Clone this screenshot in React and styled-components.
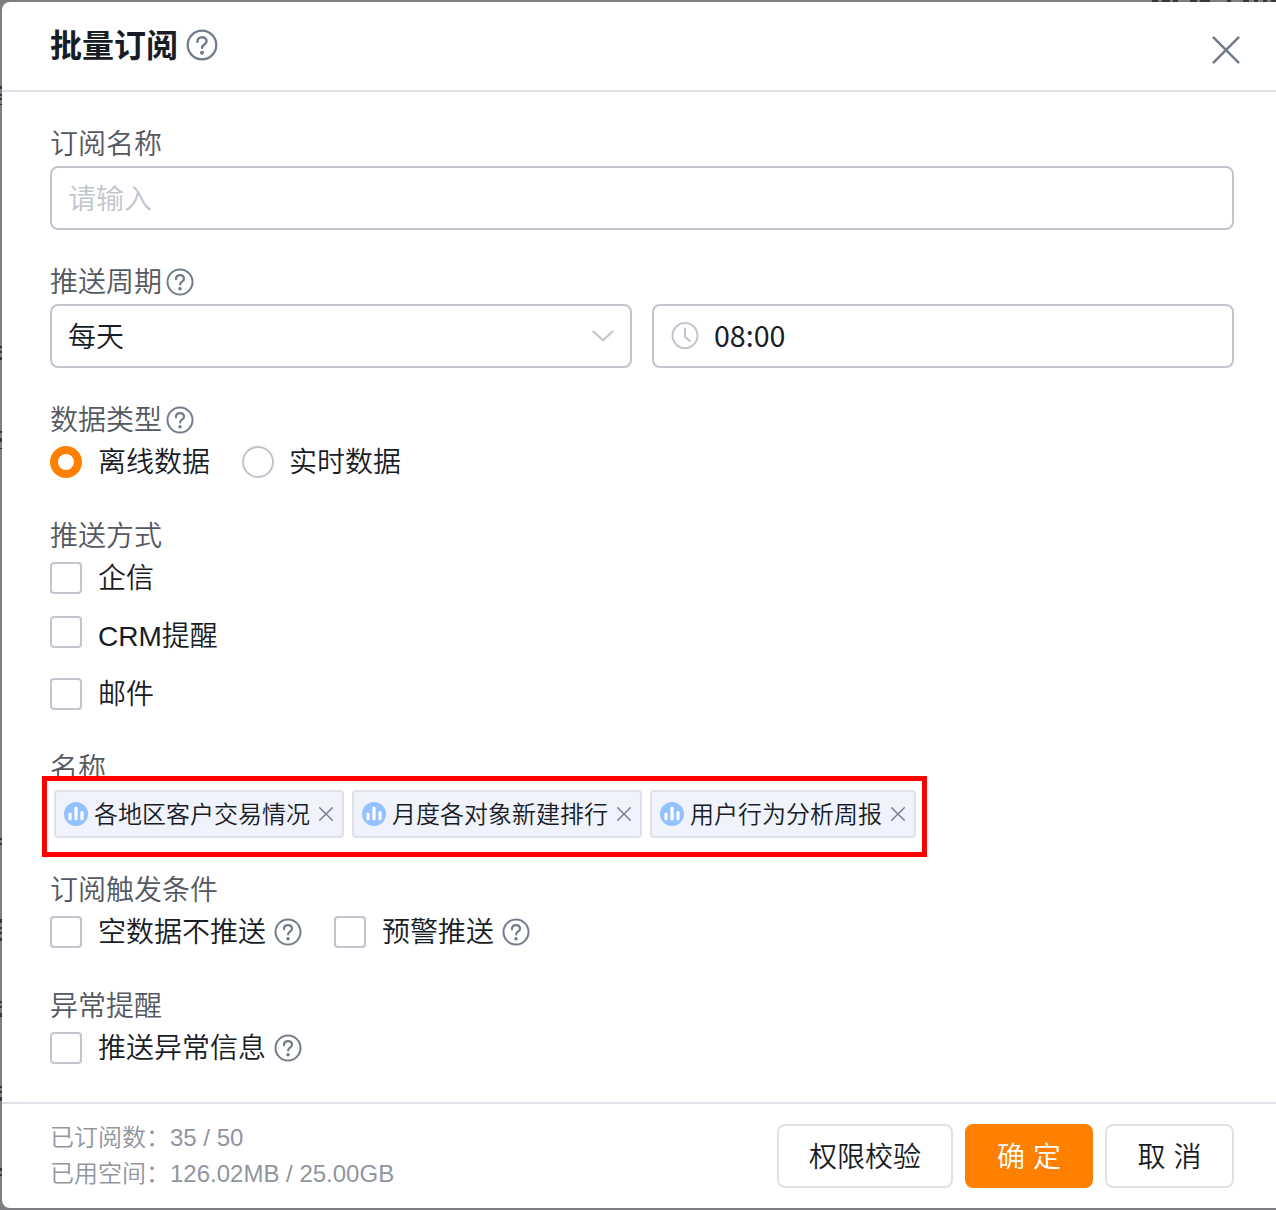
import React from 'react';
import styled, { createGlobalStyle, css } from 'styled-components';

// Styles
const GlobalStyle = createGlobalStyle`
    * { box-sizing: border-box; }

    body {
        margin: 0;
        background: #7f7f83;
        font-family: 'Liberation Sans', 'Noto Sans CJK SC', sans-serif;
        font-weight: 350;
        font-size: 28px;
        color: #181c25;
    }
`;

const Page = styled.div`
    position: relative;
    width: 1276px;
    height: 1210px;
    padding: 2px 0 2px 2px;
    overflow: hidden;
`;

// Bits of the page behind the dialog that show at its edges
const Behind = styled.i`
    position: absolute;
    background: #35373c;
`;

const Modal = styled.section`
    position: relative;
    display: flex;
    flex-direction: column;
    height: 1206px;
    background: #fff;
    border-radius: 8px 0 0 8px;
`;

const Header = styled.header`
    display: flex;
    align-items: center;
    height: 90px;
    padding: 0 36px 2px 48px;
    border-bottom: 2px solid #dee1e8;
`;

const Title = styled.h1`
    margin: 0 8px 0 0;
    padding-top: 2px;
    font-size: 32px;
    line-height: 48px;
    font-weight: 700;
`;

const Close = styled.button`
    display: flex;
    margin: 10px 0 0 auto;
    padding: 0;
    border: 0;
    background: none;
`;

const Body = styled.div`
    flex: 1;
    padding: 32px 42px 0 48px;
`;

const Field = styled.div`
    position: relative;
    margin-bottom: ${props => props.$gap || 32}px;
`;

const Label = styled.div`
    display: flex;
    align-items: center;
    gap: 4px;
    height: 39px;
    margin-bottom: 3px;
    line-height: 38px;
    color: #545861;
`;

const Text = styled.span`
    padding-top: ${props => props.$down || 0}px;
    padding-bottom: ${props => props.$up || 0}px;
`;

const Row = styled.div`
    display: flex;
    gap: ${props => props.$gap}px;
    padding-left: ${props => props.$indent || 0}px;
`;

const Box = styled.div`
    display: flex;
    align-items: center;
    flex: 1;
    height: 64px;
    padding: 0 16px;
    border: 2px solid #c1c5ce;
    border-radius: 8px;
    font-family: 'Noto Sans CJK SC', sans-serif;
    color: ${props => (props.$placeholder ? '#c1c5ce' : '#181c25')};
`;

const Time = styled.span`
    margin-left: 15px;
    padding-bottom: 3px;
    font-size: 28.6px;
    font-weight: 400;
`;

const Option = styled.label`
    display: flex;
    align-items: center;
    height: 40px;
    line-height: 40px;
    margin-bottom: ${props => props.$gap || 0}px;
`;

const mark = css`
    width: 32px;
    height: 32px;
    margin-right: 16px;
    border: 2px solid #c1c5ce;
    background: #fff;
`;

const Check = styled.span`
    ${mark}
    border-radius: 4px;
    margin-bottom: ${props => (props.$raised ? 8 : 0)}px;
`;

const Radio = styled.span`
    ${mark}
    margin-right: 15px;
    border-radius: 50%;
    ${props => props.$on && css`
        margin-right: 16px;
        border: 8px solid #ff8000;
    `}
`;

const Tag = styled.div`
    display: flex;
    align-items: center;
    height: 48px;
    padding: 0 8px;
    border: 2px solid #dee1e8;
    border-radius: 4px;
    background: #f0f3fb;
    font-size: 24px;
    white-space: nowrap;
`;

const TagText = styled.span`
    margin: 0 8px 0 6px;
    padding-bottom: 4px;
`;

const Highlight = styled.div`
    position: absolute;
    left: -8px;
    top: 28px;
    width: 885px;
    height: 81px;
    border: 5px solid #ff0000;
`;

const Footer = styled.footer`
    display: flex;
    align-items: center;
    height: 106px;
    padding: 0 42px 0 48px;
    border-top: 2px solid #dee1e8;
`;

const Usage = styled.div`
    flex: 1;
    font-size: 24px;
    line-height: 36px;
    color: #91959e;
`;

const Button = styled.button`
    width: ${props => props.$width}px;
    height: 64px;
    margin-left: 12px;
    padding: 0 0 2px;
    border: 2px solid ${props => (props.$primary ? '#ff8000' : '#dee1e8')};
    border-radius: 8px;
    background: ${props => (props.$primary ? '#ff8000' : '#fff')};
    color: ${props => (props.$primary ? '#fff' : '#181c25')};
    font: inherit;
`;

// Icons
const Icon = styled.svg`
    flex: none;
    fill: none;
    stroke-linecap: round;
    margin-left: ${props => props.$left || 0}px;
`;

const Arrow = styled(Icon)`
    margin-left: auto;
`;

const HelpIcon = ({ size = 28, left = 0 }) => (
    <Icon $left={left} width={size} height={size} viewBox="0 0 28 28" stroke="#737c8c" strokeWidth="2">
        <circle cx="14" cy="14" r="12.5" />
        <path d="M10 11.2c0-2.4 1.7-4 4-4s4 1.5 4 3.6c0 2.8-3.9 2.9-3.9 5.6" strokeWidth="2.2" />
        <circle cx="14" cy="20.8" r="1.8" fill="#737c8c" stroke="none" />
    </Icon>
);

const CloseIcon = ({ size, width }) => (
    <Icon width={size} height={size} viewBox={`0 0 ${size} ${size}`} stroke="#737c8c" strokeWidth={width}>
        <path d={`M1.7 1.7L${size - 1.7} ${size - 1.7}M${size - 1.7} 1.7L1.7 ${size - 1.7}`} />
    </Icon>
);

const ChartIcon = () => (
    <Icon width="24" height="24" viewBox="0 0 24 24">
        <circle cx="12" cy="12" r="12" fill="#94c1ff" />
        <path d="M6 12v4.8M12 6v10.8M18 10.5v6.3" stroke="#fff" strokeWidth="3.2" />
    </Icon>
);

const ClockIcon = () => (
    <Icon $left={1} width="28" height="28" viewBox="0 0 28 28" stroke="#c1c5ce" strokeWidth="2">
        <circle cx="14" cy="13.6" r="12.5" />
        <path d="M14 6.6v8.5l5 4" />
    </Icon>
);

const ArrowIcon = () => (
    <Arrow width="22" height="12" viewBox="0 0 22 12" stroke="#c1c5ce" strokeWidth="2.2">
        <path d="M1.5 1.5L11 10.3l9.5-8.8" />
    </Arrow>
);

const tags = ['各地区客户交易情况', '月度各对象新建排行', '用户行为分析周报'];

// x, y, width, height
const behind = [
    [0, 86, 2, 3], [0, 94, 2, 2], [0, 98, 2, 2], [0, 104, 2, 1],
    [0, 346, 2, 2], [0, 351, 2, 2], [0, 357, 2, 3],
    [0, 431, 2, 2], [0, 438, 2, 4], [0, 448, 2, 1],
    [0, 838, 2, 2], [0, 843, 2, 2],
    [0, 919, 2, 4], [0, 927, 2, 2], [0, 932, 2, 2], [0, 938, 2, 3],
    [0, 1001, 2, 2], [0, 1006, 2, 2], [0, 1013, 2, 4],
    [0, 1086, 2, 2], [0, 1091, 2, 2], [0, 1097, 2, 4],
    [0, 1168, 2, 3], [0, 1174, 2, 2],
    [1152, 0, 6, 2], [1162, 0, 8, 2], [1173, 0, 5, 2],
    [1190, 0, 7, 2], [1200, 0, 10, 2], [1227, 0, 4, 2],
    [1243, 0, 6, 2], [1254, 0, 4, 2], [1263, 0, 4, 2], [1271, 0, 5, 2],
];

const App = () => (
    <Page>
        <GlobalStyle />
        {behind.map(([left, top, width, height]) => (
            <Behind key={`${left}-${top}`} style={{ left, top, width, height }} />
        ))}
        <Modal>
            <Header>
                <Title>批量订阅</Title>
                <HelpIcon size={32} />
                <Close><CloseIcon size={28} width={2.6} /></Close>
            </Header>

            <Body>
                <Field>
                    <Label><Text $down={3}>订阅名称</Text></Label>
                    <Box $placeholder><Text $up={2}>请输入</Text></Box>
                </Field>

                <Field>
                    <Label><Text $down={3}>推送周期</Text><HelpIcon /></Label>
                    <Row $gap={20}>
                        <Box><Text $up={2}>每天</Text><ArrowIcon /></Box>
                        <Box><ClockIcon /><Time>08:00</Time></Box>
                    </Row>
                </Field>

                <Field $gap={34}>
                    <Label><Text $down={3}>数据类型</Text><HelpIcon /></Label>
                    <Row $gap={32}>
                        <Option><Radio $on /><Text $down={2}>离线数据</Text></Option>
                        <Option><Radio /><Text $down={2}>实时数据</Text></Option>
                    </Row>
                </Field>

                <Field $gap={34}>
                    <Label><Text $down={3}>推送方式</Text></Label>
                    <Option $gap={18}><Check /><Text $down={2}>企信</Text></Option>
                    <Option $gap={18}><Check $raised /><Text $down={2}>CRM提醒</Text></Option>
                    <Option><Check /><Text $down={2}>邮件</Text></Option>
                </Field>

                <Field>
                    <Label><Text $down={3}>名称</Text></Label>
                    <Row $gap={8} $indent={4}>
                        {tags.map(tag => (
                            <Tag key={tag}>
                                <ChartIcon />
                                <TagText>{tag}</TagText>
                                <CloseIcon size={16} width={1.4} />
                            </Tag>
                        ))}
                    </Row>
                    <Highlight />
                </Field>

                <Field $gap={34}>
                    <Label><Text $down={3}>订阅触发条件</Text></Label>
                    <Row $gap={32}>
                        <Option><Check /><Text $down={2}>空数据不推送</Text><HelpIcon left={8} /></Option>
                        <Option><Check /><Text $down={2}>预警推送</Text><HelpIcon left={8} /></Option>
                    </Row>
                </Field>

                <Field $gap={0}>
                    <Label><Text $down={3}>异常提醒</Text></Label>
                    <Option><Check /><Text $down={2}>推送异常信息</Text><HelpIcon left={8} /></Option>
                </Field>
            </Body>

            <Footer>
                <Usage>
                    <div>已订阅数：35 / 50</div>
                    <div>已用空间：126.02MB / 25.00GB</div>
                </Usage>
                <Button $width={176}>权限校验</Button>
                <Button $width={128} $primary>确 定</Button>
                <Button $width={129}>取 消</Button>
            </Footer>
        </Modal>
    </Page>
);

export default App;
